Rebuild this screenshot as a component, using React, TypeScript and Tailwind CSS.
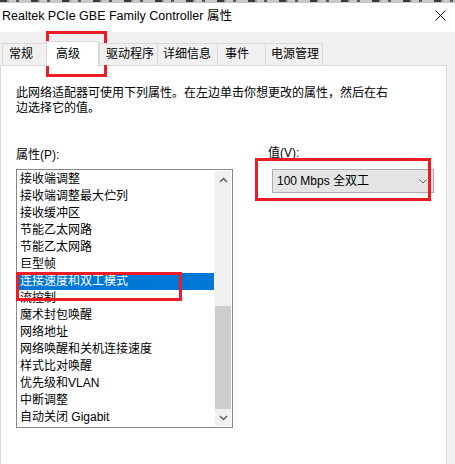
const FONT = "font-['Liberation_Sans','Noto_Sans_CJK_SC',sans-serif]";

// tabs across the top of the property sheet — padding written out per tab
const TABS = [
  { label: "常规", cls: "w-[44px] pl-[6px]" },
  { label: "高级", cls: "w-[53px] pl-[9px]", active: true },
  { label: "驱动程序", cls: "w-[58px] pl-[6px]" },
  { label: "详细信息", cls: "w-[60px] pl-[5px]" },
  { label: "事件", cls: "w-[48px] pl-[7px]" },
  { label: "电源管理", cls: "w-[58px] pl-[5px] border-r" },
];

const PROPS = [
  "接收端调整",
  "接收端调整最大伫列",
  "接收缓冲区",
  "节能乙太网路",
  "节能乙太网路",
  "巨型帧",
  "连接速度和双工模式",
  "流控制",
  "魔术封包唤醒",
  "网络地址",
  "网络唤醒和关机连接速度",
  "样式比对唤醒",
  "优先级和VLAN",
  "中断调整",
  "自动关闭 Gigabit",
];

const SELECTED = 6;

function Chevron({ up = false }: { up?: boolean }) {
  return (
    <svg width="9" height="6" viewBox="0 0 9 6" className="block">
      <path
        d={up ? "M1 5 L4.5 1.5 L8 5" : "M1 1 L4.5 4.5 L8 1"}
        fill="none"
        stroke="#606060"
        strokeWidth="1.5"
      />
    </svg>
  );
}

function ListBox() {
  return (
    <div className="flex h-[259px] w-[217px] border border-[#828790] bg-white pb-px pr-px pt-px">
      <div className="w-[197px] overflow-hidden">
        {PROPS.map((p, i) => (
          <div
            key={i}
            className={`h-[17px] whitespace-nowrap pl-[3px] leading-[17px] ${
              i === SELECTED ? "bg-[#0078d7] text-white" : "text-black"
            }`}
          >
            {p}
          </div>
        ))}
      </div>
      {/* scrollbar */}
      <div className="ml-px flex w-[16px] flex-col bg-[#f0f0f0]">
        <div className="flex h-[17px] items-center justify-center">
          <Chevron up />
        </div>
        <div className="flex flex-1 flex-col justify-end">
          <div className="h-[103px] bg-[#cdcdcd]" />
        </div>
        <div className="flex h-[17px] items-center justify-center">
          <Chevron />
        </div>
      </div>
    </div>
  );
}

export default function App() {
  return (
    <div className={`relative flex h-[464px] w-[455px] flex-col overflow-hidden bg-[#f0f0f0] text-[12px] text-black ${FONT}`}>
      {/* cut-off strip of the window above */}
      <div className="h-[3px] bg-[#c8c8c8]">
        <div className="h-[2px] bg-[repeating-linear-gradient(90deg,#3a3a3a_0px,#3a3a3a_7px,#9a9a9a_7px,#9a9a9a_9px,transparent_9px,transparent_16px,#5a5a5a_16px,#5a5a5a_19px,transparent_19px,transparent_31px)]" />
      </div>

      {/* title bar */}
      <div className="flex h-[29px] items-start justify-between bg-white pl-[2px] pr-[9px]">
        <div className="pt-[5px] text-[12.5px] leading-[16px]">Realtek PCIe GBE Family Controller 属性</div>
        <svg width="11" height="11" viewBox="0 0 11 11" className="mt-[7px]">
          <path d="M0.5 0.5 L10.5 10.5 M10.5 0.5 L0.5 10.5" stroke="#000" strokeWidth="1" />
        </svg>
      </div>

      {/* tabs */}
      <div className="relative z-10 -mb-px mt-[9px] flex h-[25px] items-end pl-[2px]">
        {TABS.map((t) =>
          t.active ? (
            <div
              key={t.label}
              className={`${t.cls} h-[25px] border-l border-r border-t border-[#d9d9d9] bg-white pt-[3px] leading-[18px]`}
            >
              {t.label}
            </div>
          ) : (
            <div
              key={t.label}
              className={`${t.cls} mb-px h-[22px] border-l border-t border-[#d9d9d9] bg-[#f0f0f0] leading-[21px]`}
            >
              {t.label}
            </div>
          )
        )}
      </div>

      {/* tab page */}
      <div className="flex w-[447px] flex-1 flex-col border-l border-r border-t border-[#d9d9d9] bg-white pl-[15px] pt-[20px]">
        <p className="w-[378px] leading-[15px]">
          此网络适配器可使用下列属性。在左边单击你想更改的属性，然后在右边选择它的值。
        </p>

        <div className="mt-[32px] flex gap-[35px]">
          <div className="flex flex-col">
            <div className="leading-[15px]">属性(P):</div>
            <div className="mt-[6px]">
              <ListBox />
            </div>
          </div>
          <div className="flex flex-col">
            <div className="-mt-[2px] leading-[15px]">值(V):</div>
            <div className="ml-[4px] mt-[8px] flex h-[24px] w-[162px] items-center justify-between border border-[#adadad] bg-[#e5e5e5] pl-[4px] pr-[6px]">
              <span>100 Mbps 全双工</span>
              <svg width="8" height="5" viewBox="0 0 8 5">
                <path d="M0.5 0.5 L4 4 L7.5 0.5" fill="none" stroke="#606060" strokeWidth="1" />
              </svg>
            </div>
          </div>
        </div>
      </div>

      {/* red annotation boxes */}
      <div className="absolute left-[46px] top-[31px] h-[46px] w-[61px] border-[3px] border-[#ed1c24]" />
      <div className="absolute left-[16px] top-[272px] h-[29px] w-[166px] border-[3px] border-[#ed1c24]" />
      <div className="absolute left-[255px] top-[158px] h-[43px] w-[176px] border-[3px] border-[#ed1c24]" />
    </div>
  );
}
